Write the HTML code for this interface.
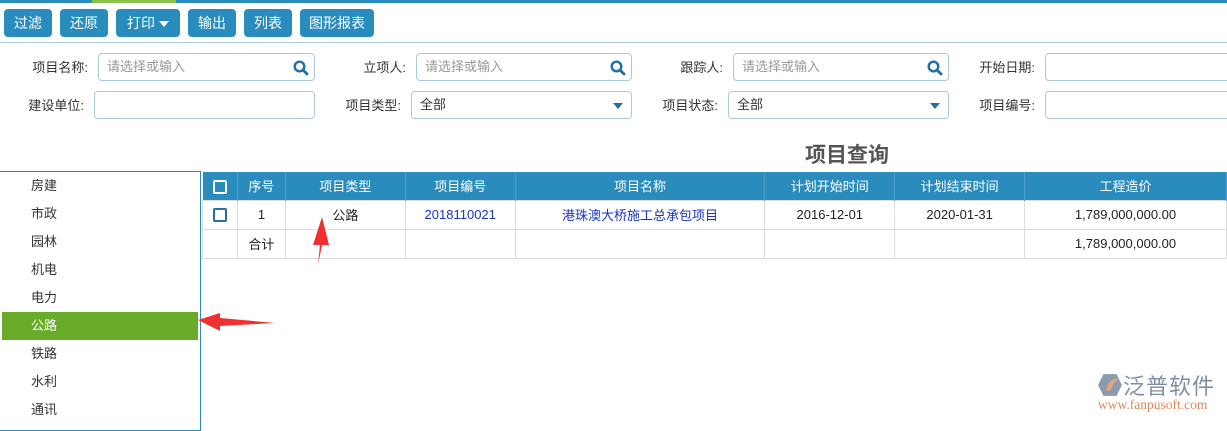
<!DOCTYPE html>
<html><head><meta charset="utf-8"><style>
*{box-sizing:border-box;margin:0;padding:0}
body{width:1227px;height:419px;overflow:hidden;background:#fff;font-family:"Liberation Sans","Noto Sans CJK SC",sans-serif;font-size:13px;color:#333;position:relative}
.abs{position:absolute}
.topline{left:0;top:0;width:1227px;height:3px;background:#2a8bbd}
.green{left:92px;top:0;width:84px;height:3px;background:#8bc34a}
.btn{position:absolute;top:9px;height:28px;background:#2a8bbd;color:#fff;border-radius:4px;font-size:14px;line-height:28px;text-align:center}
.tbline{left:0;top:42px;width:1227px;height:1px;background:#a9cbe3}
.lbl{position:absolute;font-size:13px;color:#333;text-align:right}
.inp{position:absolute;height:28px;border:1px solid #a9c8e0;border-radius:4px;background:#fff;font-size:13px;line-height:26px;padding-left:8px;color:#999}
.inp.v{color:#333}
.mag{position:absolute;right:5px;top:6px}
.tri{position:absolute;right:8px;top:11px;width:0;height:0;border-left:5px solid transparent;border-right:5px solid transparent;border-top:6px solid #1f6fa8}
.title{left:805px;top:139px;font-size:21px;font-weight:bold;color:#555}
.left{left:0;top:171px;width:201px;height:260px;border:1px solid #2a8bbd;border-left:none}
.it{position:absolute;left:0;width:198px;height:28px;line-height:28px;padding-left:31px;font-size:13px;color:#333}
.it.sel{background:#6aaa2a;color:#fff;left:2px;width:196px;padding-left:29px}
table{position:absolute;left:202px;top:172px;border-collapse:collapse;font-size:13px}
th{background:#2a8bbd;color:#fff;font-weight:normal;height:28px;border-right:1px solid #4fa0c8;text-align:center}
td{height:29px;border:1px solid #ddd;text-align:center;color:#222}
.cb{display:inline-block;width:14px;height:14px;border:2px solid #2a6fa0;border-radius:2px;vertical-align:middle;background:#fff}
th .cb{border-color:#fff;background:transparent}
a{color:#1a34c8;text-decoration:none}
</style></head><body>
<div class="abs topline"></div><div class="abs green"></div>
<div class="btn" style="left:4px;width:48px">过滤</div>
<div class="btn" style="left:60px;width:48px">还原</div>
<div class="btn" style="left:116px;width:64px">打印 <span style="display:inline-block;width:0;height:0;border-left:5px solid transparent;border-right:5px solid transparent;border-top:6px solid #fff;vertical-align:middle"></span></div>
<div class="btn" style="left:188px;width:48px">输出</div>
<div class="btn" style="left:244px;width:48px">列表</div>
<div class="btn" style="left:300px;width:74px">图形报表</div>
<div class="abs tbline"></div>

<div class="lbl" style="left:20px;top:57px;width:68px">项目名称:</div>
<div class="inp" style="left:98px;top:53px;width:217px">请选择或输入<svg class="mag" width="16" height="16" viewBox="0 0 16 16"><circle cx="6.5" cy="6.5" r="4.8" fill="none" stroke="#1f6fa8" stroke-width="2.4"/><path d="M10 10l4 4" stroke="#1f6fa8" stroke-width="2.8" stroke-linecap="round"/></svg></div>
<div class="lbl" style="left:340px;top:57px;width:66px">立项人:</div>
<div class="inp" style="left:416px;top:53px;width:216px">请选择或输入<svg class="mag" width="16" height="16" viewBox="0 0 16 16"><circle cx="6.5" cy="6.5" r="4.8" fill="none" stroke="#1f6fa8" stroke-width="2.4"/><path d="M10 10l4 4" stroke="#1f6fa8" stroke-width="2.8" stroke-linecap="round"/></svg></div>
<div class="lbl" style="left:657px;top:57px;width:66px">跟踪人:</div>
<div class="inp" style="left:733px;top:53px;width:216px">请选择或输入<svg class="mag" width="16" height="16" viewBox="0 0 16 16"><circle cx="6.5" cy="6.5" r="4.8" fill="none" stroke="#1f6fa8" stroke-width="2.4"/><path d="M10 10l4 4" stroke="#1f6fa8" stroke-width="2.8" stroke-linecap="round"/></svg></div>
<div class="lbl" style="left:965px;top:57px;width:70px">开始日期:</div>
<div class="inp" style="left:1045px;top:53px;width:200px"></div>

<div class="lbl" style="left:14px;top:95px;width:70px">建设单位:</div>
<div class="inp" style="left:94px;top:91px;width:221px"></div>
<div class="lbl" style="left:331px;top:95px;width:70px">项目类型:</div>
<div class="inp v" style="left:411px;top:91px;width:221px">全部<div class="tri"></div></div>
<div class="lbl" style="left:648px;top:95px;width:70px">项目状态:</div>
<div class="inp v" style="left:728px;top:91px;width:221px">全部<div class="tri"></div></div>
<div class="lbl" style="left:965px;top:95px;width:70px">项目编号:</div>
<div class="inp" style="left:1045px;top:91px;width:200px"></div>

<div class="abs title">项目查询</div>

<div class="abs left">
<div class="it" style="top:0">房建</div>
<div class="it" style="top:28px">市政</div>
<div class="it" style="top:56px">园林</div>
<div class="it" style="top:84px">机电</div>
<div class="it" style="top:112px">电力</div>
<div class="it sel" style="top:140px">公路</div>
<div class="it" style="top:168px">铁路</div>
<div class="it" style="top:196px">水利</div>
<div class="it" style="top:224px">通讯</div>
</div>

<table>
<tr><th style="width:35px"><span class="cb"></span></th><th style="width:48px">序号</th><th style="width:120px">项目类型</th><th style="width:110px">项目编号</th><th style="width:250px">项目名称</th><th style="width:130px">计划开始时间</th><th style="width:130px">计划结束时间</th><th style="width:202px">工程造价</th></tr>
<tr><td><span class="cb"></span></td><td>1</td><td>公路</td><td><a>2018110021</a></td><td><a>港珠澳大桥施工总承包项目</a></td><td>2016-12-01</td><td>2020-01-31</td><td>1,789,000,000.00</td></tr>
<tr><td></td><td>合计</td><td></td><td></td><td></td><td></td><td></td><td>1,789,000,000.00</td></tr>
</table>

<svg class="abs" style="left:195px;top:205px" width="140" height="130" viewBox="0 0 140 130">
<path d="M127 12 L118 40 L125 40 L123 60 L127 40 L134 40 Z" fill="#f03030"/>
<path d="M3 115 L25 108 L25 113 L80 118 L25 121 L25 126 Z" fill="#f03030"/>
</svg>

<svg class="abs" style="left:1097px;top:373px" width="26" height="24" viewBox="0 0 24 22"><path d="M6 1h12l5 10-5 10H6L1 11z" fill="#8a9bb0"/><path d="M8 16c2-8 6-11 12-11-4 3-6 6-7 11z" fill="#e9a27a"/></svg>
<div class="abs" style="left:1123px;top:369px;font-size:22px;color:#7f8ea6;letter-spacing:1px">泛普软件</div>
<div class="abs" style="left:1098px;top:397px;font-family:'Liberation Serif',serif;font-size:13.5px;color:#e08a5c">www.fanpusoft.com</div>
</body></html>
